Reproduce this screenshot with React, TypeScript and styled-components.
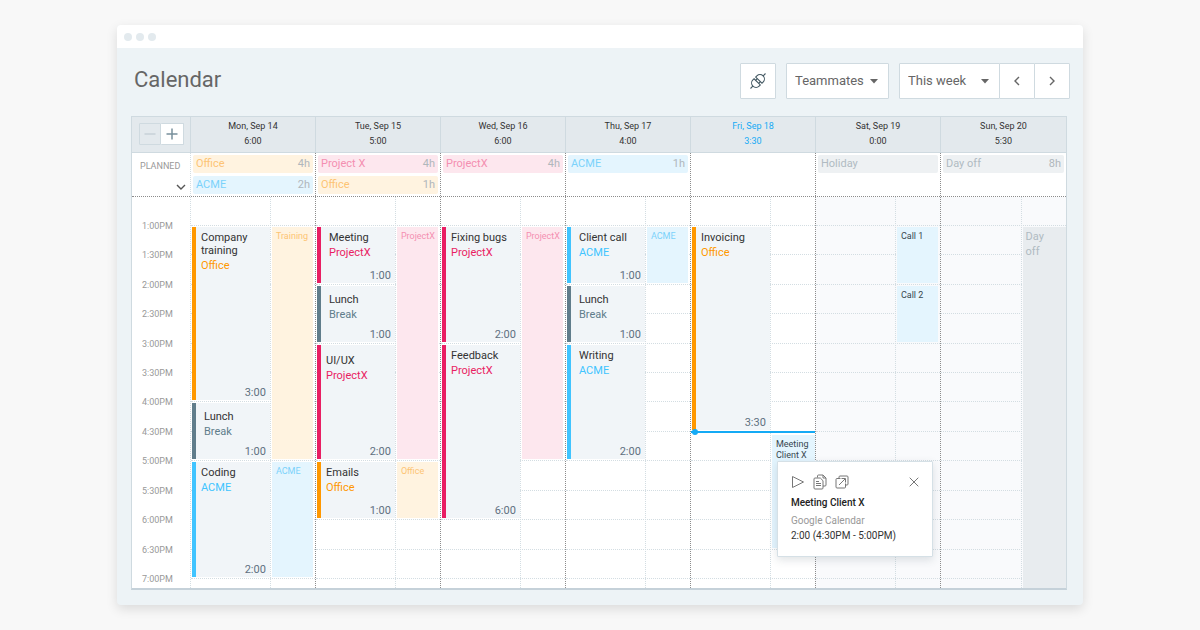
import React from "react";
import styled, { createGlobalStyle, css } from "styled-components";

const GlobalStyle = createGlobalStyle`
  *, *::before, *::after { box-sizing: border-box; }
  body {
    margin: 0;
    background: #f8f8f8;
    color: #333;
    font-family: Roboto, "Liberation Sans", sans-serif;
  }
  button, select { font: inherit; color: inherit; margin: 0; }
  h1, h2, h3, p { margin: 0; font-weight: 400; }
`;

type Tone = "orange" | "pink" | "blue" | "slate" | "gray" | "dark";

const tones: Record<Tone, { solid: string; pale: string; paleText: string }> = {
  orange: { solid: "#ff9800", pale: "#fff3e0", paleText: "#fdc474" },
  pink: { solid: "#e91e63", pale: "#fde7ee", paleText: "#f48fb1" },
  blue: { solid: "#40c4ff", pale: "#e4f5fe", paleText: "#7ad2fb" },
  slate: { solid: "#607d8b", pale: "#eceff1", paleText: "#90a4ae" },
  gray: { solid: "#b0bec5", pale: "#e8ecef", paleText: "#b0bbc2" },
  dark: { solid: "#333", pale: "#e4f5fe", paleText: "#37474f" },
};

const line = "#cfdae0";
const softLine = "#d3dde2";
const darkLine = "#8c8c8c";

/* ---------- window ---------- */

const Page = styled.main`
  padding: 25px 117px;
  @media (max-width: 1000px) {
    padding: 25px 16px;
  }
`;

const AppWindow = styled.section`
  border-radius: 4px;
  background: #edf3f6;
  box-shadow: 0 4px 12px rgba(0, 0, 0, 0.12);
`;

const TitleBar = styled.div`
  display: flex;
  align-items: center;
  gap: 4px;
  height: 23px;
  padding: 0 7px;
  border-radius: 4px 4px 0 0;
  background: #fff;
`;

const Dot = styled.span`
  width: 8px;
  height: 8px;
  border-radius: 50%;
  background: #e3eaee;
`;

const Toolbar = styled.header`
  display: flex;
  align-items: center;
  gap: 10px;
  padding: 15px 13px 17px 17px;
  color: #666;
`;

const Title = styled.h1`
  flex: 1;
  padding-bottom: 2px;
  font-size: 22px;
  line-height: 34px;
`;

const IconButton = styled.button`
  display: flex;
  align-items: center;
  justify-content: center;
  width: 36px;
  height: 36px;
  padding: 0;
  border: 1px solid ${line};
  border-radius: 1px;
  background: #fff;
`;

const SelectBox = styled.label<{ $width: number }>`
  display: grid;
  grid-template-columns: 1fr 18px;
  align-items: center;
  width: ${(p) => p.$width}px;
  height: 36px;
  border: 1px solid ${line};
  border-radius: 1px;
  background: #fff;

  select {
    grid-area: 1 / 1 / 2 / 3;
    height: 34px;
    padding: 0 18px 2px 8px;
    border: 0;
    background: transparent;
    appearance: none;
    font-size: 13px;
  }
  svg {
    grid-area: 1 / 2;
    pointer-events: none;
  }
`;

const RangeGroup = styled.div`
  display: flex;
  & > * + * {
    margin-left: -1px;
  }
`;

/* ---------- calendar ---------- */

const Calendar = styled.div`
  margin: 0 16px 0 14px;
  border: 1px solid ${line};
  border-bottom: 2px solid #c5d1d9;
  background: #fff;
`;

const Body = styled.div`
  padding-bottom: 15px;
`;

const Row = styled.div`
  display: grid;
  grid-template-columns: 58px repeat(6, minmax(0, 125fr)) minmax(0, 126fr);
`;

const HeadRow = styled(Row)`
  border-bottom: 1px solid ${line};
  background: #e3e9ed;
`;

const HeadCell = styled.div<{ $today?: boolean }>`
  padding: 2px 0 3px;
  border-left: 1px solid ${line};
  text-align: center;
  font-size: 9px;
  line-height: 15px;
  color: ${(p) => (p.$today ? "#14aaf5" : "#333")};
`;

const ZoomCell = styled.div`
  display: flex;
  align-items: center;
  justify-content: center;
  padding-bottom: 1px;
`;

const ZoomButton = styled.button<{ $muted?: boolean }>`
  display: flex;
  align-items: center;
  justify-content: center;
  width: 22px;
  height: 22px;
  padding: 0;
  border: 1px solid ${line};
  border-radius: 1px;
  background: ${(p) => (p.$muted ? "transparent" : "#fff")};
  color: ${(p) => (p.$muted ? "#c0ccd2" : "#78909c")};
  & + & {
    width: 23px;
    border-left: 0;
  }
`;

const PlannedRow = styled(Row)`
  min-height: 44px;
  border-bottom: 1px dotted ${darkLine};
`;

const PlannedHead = styled.div`
  display: flex;
  flex-direction: column;
  justify-content: space-between;
  padding: 7px 4px 6px 8px;
  color: #999;
  font-size: 9px;
  line-height: 12px;
`;

const ExpandButton = styled.button`
  display: flex;
  align-self: flex-end;
  padding: 0;
  border: 0;
  background: none;
  color: #555;
`;

const dayEdge = css<{ $first?: boolean }>`
  border-left: 1px dotted ${(p) => (p.$first ? softLine : darkLine)};
`;

const PlannedCell = styled.div<{ $first?: boolean }>`
  ${dayEdge}
  display: flex;
  flex-direction: column;
  gap: 3px;
  padding: 2px;
`;

const Chip = styled.div<{ $tone: Tone }>`
  display: flex;
  justify-content: space-between;
  padding: 0 3px;
  border-radius: 2px;
  background: ${(p) => (p.$tone === "gray" ? "#eef1f3" : tones[p.$tone].pale)};
  color: ${(p) => tones[p.$tone].paleText};
  font-size: 11px;
  line-height: 18px;
`;

const ChipHours = styled.span`
  color: #b0b7bc;
`;

const timeRows = css`
  display: grid;
  grid-template-rows: 28px repeat(12, minmax(0, 1fr)) 10px;
  height: 391px;
`;

const TimeAxis = styled.div`
  ${timeRows}
`;

const TimeLabel = styled.div`
  margin-top: -5px;
  padding-left: 10px;
  color: #999;
  font-size: 9px;
  line-height: 12px;
  white-space: nowrap;
`;

const DayColumn = styled.div<{ $first?: boolean; $weekend?: boolean }>`
  ${dayEdge}
  ${timeRows}
  grid-template-columns: 7fr 4fr;
  background: ${(p) => (p.$weekend ? "#f9fafc" : "#fff")};
`;

const SlotLine = styled.div<{ $row: number }>`
  grid-row: ${(p) => p.$row};
  grid-column: 1 / -1;
  border-top: 1px dotted ${softLine};
`;

const LaneLine = styled.div`
  grid-row: 1 / -1;
  grid-column: 2;
  border-left: 1px dotted ${softLine};
`;

const Entry = styled.article<{
  $from: number;
  $to: number;
  $tone: Tone;
  $indent: number;
  $top: number;
}>`
  grid-column: 1;
  grid-row: ${(p) => p.$from} / ${(p) => p.$to};
  display: flex;
  flex-direction: column;
  margin: 2px 0 1px 1px;
  padding: ${(p) => p.$top}px 4px 1px ${(p) => p.$indent}px;
  border-left: 4px solid ${(p) => tones[p.$tone].solid};
  background: #f1f5f8;
  font-size: 11px;
  line-height: 13px;
`;

const EntryTitle = styled.h2`
  font-size: 11px;
  line-height: 13px;
`;

const EntryProject = styled.p<{ $tone: Tone }>`
  line-height: 18px;
  color: ${(p) => tones[p.$tone].solid};
`;

const EntryTime = styled.p`
  margin-top: auto;
  text-align: right;
  color: #607080;
`;

const Synced = styled.div<{
  $from: number;
  $to: number;
  $tone: Tone;
  $bleed?: boolean;
}>`
  grid-column: 2;
  grid-row: ${(p) => p.$from} / ${(p) => p.$to};
  margin: 2px ${(p) => (p.$bleed ? 0 : 2)}px 1px 2px;
  padding: 4px 0 0 4px;
  background: ${(p) => tones[p.$tone].pale};
  color: ${(p) => tones[p.$tone].paleText};
  font-size: 9px;
  line-height: 11px;
`;

const DayOff = styled(Synced)`
  margin-bottom: 0;
  padding: 2px 12px 0 3px;
  font-size: 11px;
  line-height: 15px;
`;

const SelectedMeeting = styled(Synced)`
  position: relative;
  z-index: 2;
  margin-top: 4px;
`;

const NowLine = styled.div`
  grid-row: 9;
  grid-column: 1 / -1;
  position: relative;
  z-index: 1;
  height: 2px;
  background: #14aaf5;
  &::before {
    content: "";
    position: absolute;
    left: 1px;
    top: -2px;
    width: 6px;
    height: 6px;
    border-radius: 50%;
    background: #14aaf5;
  }
`;

/* ---------- popup ---------- */

const Popup = styled.div`
  position: absolute;
  top: 26px;
  left: 5px;
  width: 156px;
  padding: 11px 13px 13px;
  border: 1px solid #d5e0e6;
  border-radius: 1px;
  background: #fff;
  box-shadow: 0 3px 8px rgba(60, 80, 95, 0.16);
  color: #333;
  font-size: 10px;
  line-height: 15px;
`;

const PopupActions = styled.div`
  display: flex;
  gap: 8px;
  height: 20px;
  color: #777;
`;

const PopupButton = styled.button`
  display: flex;
  align-items: center;
  justify-content: center;
  width: 14px;
  height: 18px;
  padding: 0;
  border: 0;
  background: none;
  &:last-child {
    margin-left: auto;
    width: 10px;
  }
`;

const PopupTitle = styled.h3`
  font-size: 10px;
  line-height: 20px;
  font-weight: 500;
  color: #222;
`;

const PopupSource = styled.p`
  color: #999;
`;

/* ---------- icons ---------- */

const Caret = () => (
  <svg width="8" height="5" viewBox="0 0 8 5" aria-hidden="true">
    <path d="M0 0h8L4 4.5z" fill="#666" />
  </svg>
);

const PlugIcon = () => (
  <svg width="18" height="18" viewBox="0 0 18 18" fill="none" stroke="#455a64" strokeWidth="1.1" aria-hidden="true">
    <g transform="translate(9 9) rotate(-45)">
      <path d="M-10.6 0h3.6M7 0h3.6" />
      <path d="M-1.2 -4.400v8.800h-1.600a4.400 4.400 0 0 1 0-8.800z" />
      <path d="M1.2 -4.400v8.800h1.600a4.400 4.400 0 0 0 0-8.800z" />
      <path d="M-1.2 -2.200h2.400M-1.2 2.200h2.400" />
    </g>
  </svg>
);

const Chevron = ({ d, w, h }: { d: string; w: number; h: number }) => (
  <svg width={w} height={h} viewBox={`0 0 ${w} ${h}`} fill="none" stroke="currentColor" strokeWidth="1.4" aria-hidden="true">
    <path d={d} />
  </svg>
);

const MinusIcon = () => (
  <svg width="12" height="12" viewBox="0 0 12 12" stroke="currentColor" strokeWidth="1.2" aria-hidden="true">
    <path d="M.5 6h11" />
  </svg>
);

const PlusIcon = () => (
  <svg width="12" height="12" viewBox="0 0 12 12" stroke="currentColor" strokeWidth="1.5" aria-hidden="true">
    <path d="M.5 6h11M6 .5v11" />
  </svg>
);

const PlayIcon = () => (
  <svg width="14" height="14" viewBox="0 0 14 14" fill="none" stroke="currentColor" aria-hidden="true">
    <path d="M1.5 1.5v11L12.5 7z" strokeLinejoin="round" />
  </svg>
);

const CopyIcon = () => (
  <svg width="14" height="16" viewBox="0 0 14 16" fill="none" stroke="currentColor" aria-hidden="true">
    <path d="M4.5 3.5V2a1 1 0 0 1 1-1H10l3 3v7a1 1 0 0 1-1 1h-2" />
    <path d="M10 1v3h3" />
    <path d="M2 4h5.3L10 6.700V14a1 1 0 0 1-1 1H2a1 1 0 0 1-1-1V5a1 1 0 0 1 1-1z" />
    <path d="M3 7.500h3M3 9.500h5M3 11.500h5" />
  </svg>
);

const OpenIcon = () => (
  <svg width="14" height="14" viewBox="0 0 14 14" fill="none" stroke="currentColor" aria-hidden="true">
    <path d="M4 3.500V2a1 1 0 0 1 1-1h7a1 1 0 0 1 1 1v7a1 1 0 0 1-1 1h-1.500" />
    <path d="M5.500 3.500H2a1 1 0 0 0-1 1V12a1 1 0 0 0 1 1h7.500a1 1 0 0 0 1-1V8.500" />
    <path d="M4 10l6-6M6.500 3.500h4v4" />
  </svg>
);

const CloseIcon = () => (
  <svg width="10" height="10" viewBox="0 0 10 10" stroke="currentColor" aria-hidden="true">
    <path d="M.7.7l8.600 8.600M9.300.7L.7 9.300" />
  </svg>
);

/* ---------- data ---------- */

// Row 2 of the time grid is 1:00PM, and each row is half an hour.
interface EntryData {
  title: string;
  project: string;
  tone: Tone;
  time: string;
  from: number;
  to: number;
  indent?: number;
  top?: number;
}

interface SyncedData {
  text: string;
  tone: Tone;
  from: number;
  to: number;
  kind?: "off" | "meeting";
}

interface Day {
  name: string;
  total: string;
  today?: boolean;
  weekend?: boolean;
  planned: { name: string; tone: Tone; hours?: string }[];
  entries: EntryData[];
  synced: SyncedData[];
}

const days: Day[] = [
  {
    name: "Mon, Sep 14",
    total: "6:00",
    planned: [
      { name: "Office", tone: "orange", hours: "4h" },
      { name: "ACME", tone: "blue", hours: "2h" },
    ],
    entries: [
      { title: "Company training", project: "Office", tone: "orange", time: "3:00", from: 2, to: 8 },
      { title: "Lunch", project: "Break", tone: "slate", time: "1:00", from: 8, to: 10, indent: 8, top: 7 },
      { title: "Coding", project: "ACME", tone: "blue", time: "2:00", from: 10, to: 14 },
    ],
    synced: [
      { text: "Training", tone: "orange", from: 2, to: 10 },
      { text: "ACME", tone: "blue", from: 10, to: 14 },
    ],
  },
  {
    name: "Tue, Sep 15",
    total: "5:00",
    planned: [
      { name: "Project X", tone: "pink", hours: "4h" },
      { name: "Office", tone: "orange", hours: "1h" },
    ],
    entries: [
      { title: "Meeting", project: "ProjectX", tone: "pink", time: "1:00", from: 2, to: 4, indent: 8 },
      { title: "Lunch", project: "Break", tone: "slate", time: "1:00", from: 4, to: 6, indent: 8, top: 7 },
      { title: "UI/UX", project: "ProjectX", tone: "pink", time: "2:00", from: 6, to: 10, top: 9 },
      { title: "Emails", project: "Office", tone: "orange", time: "1:00", from: 10, to: 12 },
    ],
    synced: [
      { text: "ProjectX", tone: "pink", from: 2, to: 10 },
      { text: "Office", tone: "orange", from: 10, to: 12 },
    ],
  },
  {
    name: "Wed, Sep 16",
    total: "6:00",
    planned: [{ name: "ProjectX", tone: "pink", hours: "4h" }],
    entries: [
      { title: "Fixing bugs", project: "ProjectX", tone: "pink", time: "2:00", from: 2, to: 6 },
      { title: "Feedback", project: "ProjectX", tone: "pink", time: "6:00", from: 6, to: 12 },
    ],
    synced: [{ text: "ProjectX", tone: "pink", from: 2, to: 10 }],
  },
  {
    name: "Thu, Sep 17",
    total: "4:00",
    planned: [{ name: "ACME", tone: "blue", hours: "1h" }],
    entries: [
      { title: "Client call", project: "ACME", tone: "blue", time: "1:00", from: 2, to: 4, indent: 8 },
      { title: "Lunch", project: "Break", tone: "slate", time: "1:00", from: 4, to: 6, indent: 8, top: 7 },
      { title: "Writing", project: "ACME", tone: "blue", time: "2:00", from: 6, to: 10, indent: 8 },
    ],
    synced: [{ text: "ACME", tone: "blue", from: 2, to: 4 }],
  },
  {
    name: "Fri, Sep 18",
    total: "3:30",
    today: true,
    planned: [],
    entries: [{ title: "Invoicing", project: "Office", tone: "orange", time: "3:30", from: 2, to: 9 }],
    synced: [{ text: "Meeting Client X", tone: "dark", from: 9, to: 13, kind: "meeting" }],
  },
  {
    name: "Sat, Sep 19",
    total: "0:00",
    weekend: true,
    planned: [{ name: "Holiday", tone: "gray" }],
    entries: [],
    synced: [
      { text: "Call 1", tone: "dark", from: 2, to: 4 },
      { text: "Call 2", tone: "dark", from: 4, to: 6 },
    ],
  },
  {
    name: "Sun, Sep 20",
    total: "5:30",
    weekend: true,
    planned: [{ name: "Day off", tone: "gray", hours: "8h" }],
    entries: [],
    synced: [{ text: "Day off", tone: "gray", from: 2, to: 15, kind: "off" }],
  },
];

const times = [
  "1:00PM", "1:30PM", "2:00PM", "2:30PM", "3:00PM", "3:30PM", "4:00PM",
  "4:30PM", "5:00PM", "5:30PM", "6:00PM", "6:30PM", "7:00PM",
];

/* ---------- parts ---------- */

const MeetingPopup = () => (
  <Popup role="dialog" aria-label="Meeting Client X">
    <PopupActions>
      <PopupButton type="button" aria-label="Start timer"><PlayIcon /></PopupButton>
      <PopupButton type="button" aria-label="Copy"><CopyIcon /></PopupButton>
      <PopupButton type="button" aria-label="Open"><OpenIcon /></PopupButton>
      <PopupButton type="button" aria-label="Close"><CloseIcon /></PopupButton>
    </PopupActions>
    <PopupTitle>Meeting Client X</PopupTitle>
    <PopupSource>Google Calendar</PopupSource>
    <p>2:00 (4:30PM - 5:00PM)</p>
  </Popup>
);

const SyncedItem = ({ item }: { item: SyncedData }) => {
  const place = { $from: item.from, $to: item.to, $tone: item.tone };
  if (item.kind === "off") return <DayOff {...place} $bleed>{item.text}</DayOff>;
  if (item.kind === "meeting")
    return (
      <SelectedMeeting {...place} $bleed>
        {item.text}
        <MeetingPopup />
      </SelectedMeeting>
    );
  return <Synced {...place}>{item.text}</Synced>;
};

export default function App() {
  return (
    <Page>
      <GlobalStyle />
      <AppWindow>
        <TitleBar>
          <Dot />
          <Dot />
          <Dot />
        </TitleBar>
        <Body>
          <Toolbar>
            <Title>Calendar</Title>
            <IconButton type="button" aria-label="Integrations"><PlugIcon /></IconButton>
            <SelectBox $width={103}>
              <select aria-label="Teammates" defaultValue="Teammates">
                <option>Teammates</option>
              </select>
              <Caret />
            </SelectBox>
            <RangeGroup>
              <SelectBox $width={101}>
                <select aria-label="Period" defaultValue="This week">
                  <option>This week</option>
                </select>
                <Caret />
              </SelectBox>
              <IconButton type="button" aria-label="Previous week"><Chevron w={6} h={10} d="M5 1L1 5l4 4" /></IconButton>
              <IconButton type="button" aria-label="Next week"><Chevron w={6} h={10} d="M1 1l4 4-4 4" /></IconButton>
            </RangeGroup>
          </Toolbar>

          <Calendar>
            <HeadRow>
              <ZoomCell>
                <ZoomButton type="button" aria-label="Zoom out" $muted><MinusIcon /></ZoomButton>
                <ZoomButton type="button" aria-label="Zoom in"><PlusIcon /></ZoomButton>
              </ZoomCell>
              {days.map((day) => (
                <HeadCell key={day.name} $today={day.today}>
                  <p>{day.name}</p>
                  <p>{day.total}</p>
                </HeadCell>
              ))}
            </HeadRow>

            <PlannedRow>
              <PlannedHead>
                PLANNED
                <ExpandButton type="button" aria-label="Expand planned">
                  <Chevron w={10} h={6} d="M1 1l4 4 4-4" />
                </ExpandButton>
              </PlannedHead>
              {days.map((day, i) => (
                <PlannedCell key={day.name} $first={i === 0}>
                  {day.planned.map((plan) => (
                    <Chip key={plan.name} $tone={plan.tone}>
                      {plan.name}
                      {plan.hours && <ChipHours>{plan.hours}</ChipHours>}
                    </Chip>
                  ))}
                </PlannedCell>
              ))}
            </PlannedRow>

            <Row>
              <TimeAxis>
                <span />
                {times.map((time) => (
                  <TimeLabel key={time}>{time}</TimeLabel>
                ))}
              </TimeAxis>
              {days.map((day, i) => (
                <DayColumn key={day.name} $first={i === 0} $weekend={day.weekend}>
                  {times.map((time, slot) => (
                    <SlotLine key={time} $row={slot + 2} />
                  ))}
                  <LaneLine />
                  {day.entries.map((entry) => (
                    <Entry
                      key={entry.title}
                      $from={entry.from}
                      $to={entry.to}
                      $tone={entry.tone}
                      $indent={entry.indent ?? 5}
                      $top={entry.top ?? 4}
                    >
                      <EntryTitle>{entry.title}</EntryTitle>
                      <EntryProject $tone={entry.tone}>{entry.project}</EntryProject>
                      <EntryTime>{entry.time}</EntryTime>
                    </Entry>
                  ))}
                  {day.synced.map((item) => (
                    <SyncedItem key={item.text} item={item} />
                  ))}
                  {day.today && <NowLine />}
                </DayColumn>
              ))}
            </Row>
          </Calendar>
        </Body>
      </AppWindow>
    </Page>
  );
}
